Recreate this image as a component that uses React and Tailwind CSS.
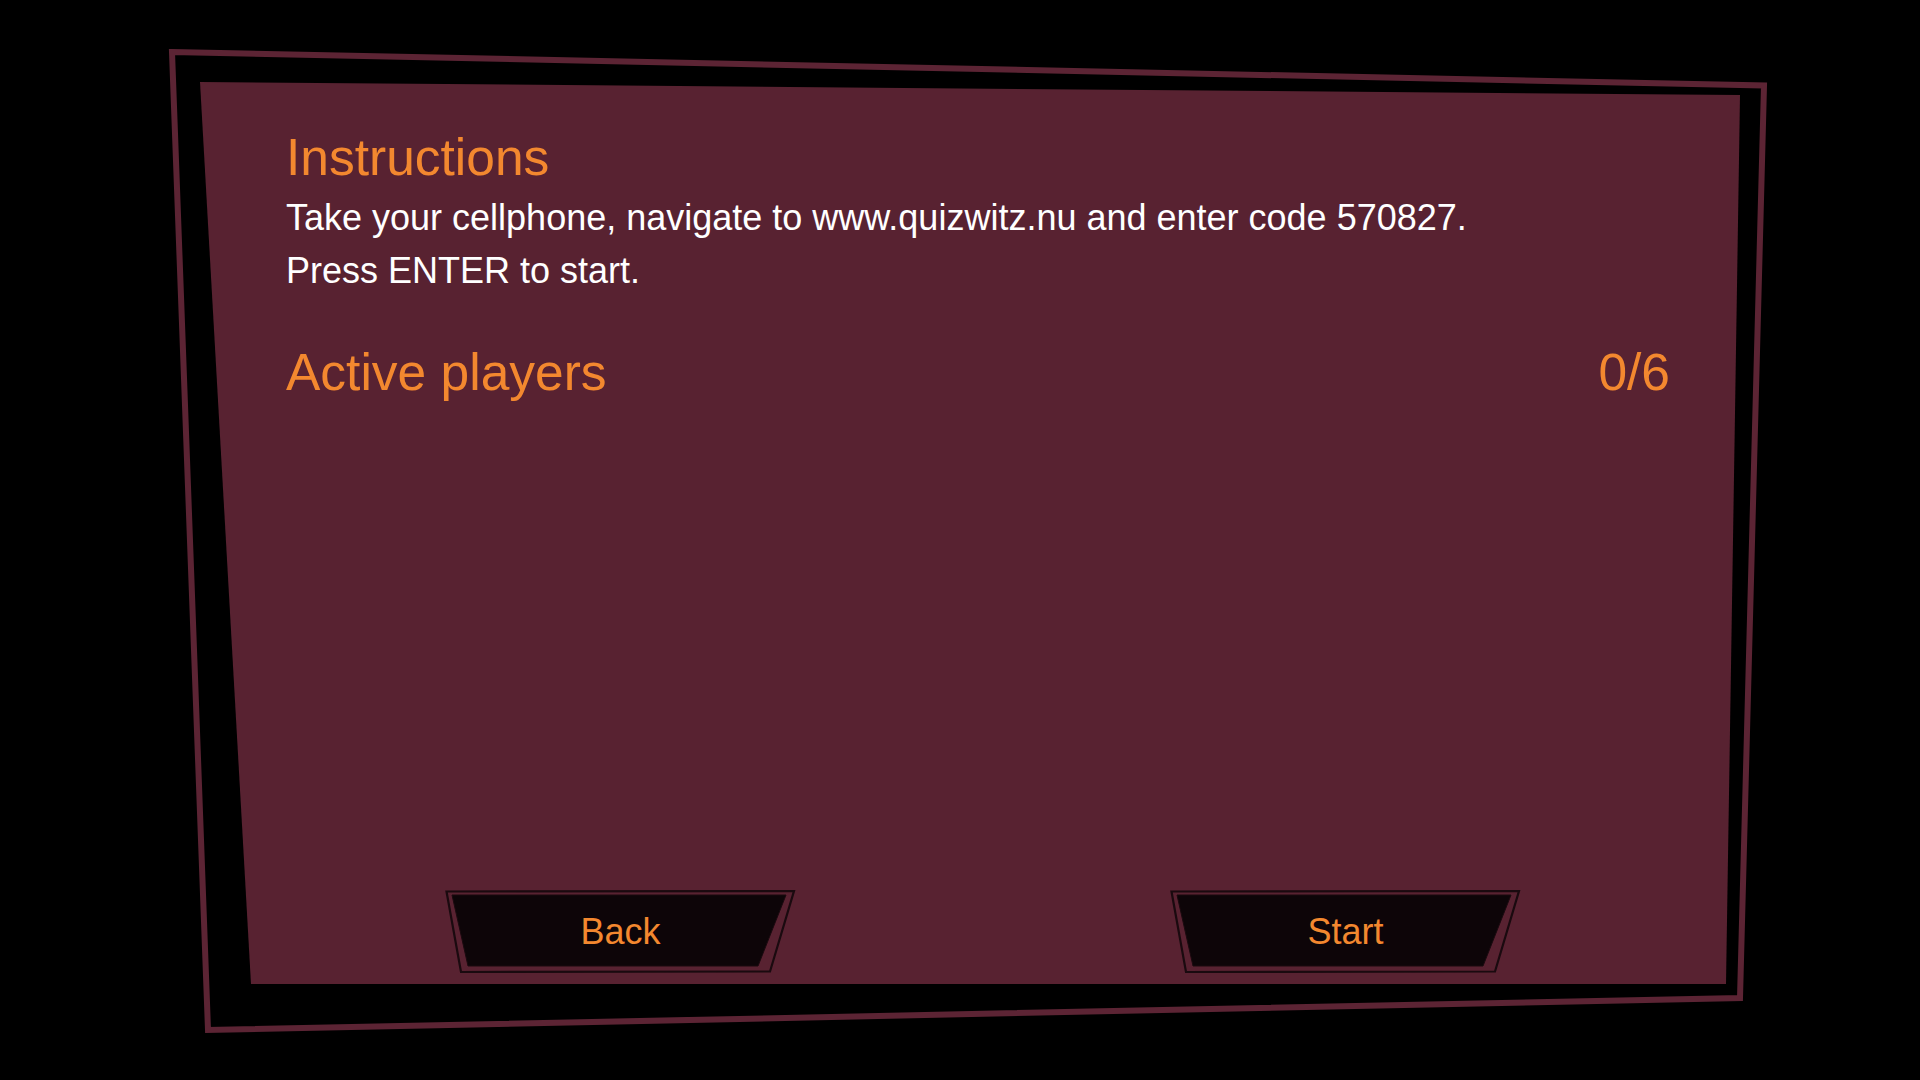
import React from "react";

function TrapButton({ label }) {
  return (
    <button
      type="button"
      className="relative w-[351px] h-[85px] flex justify-center cursor-pointer bg-transparent border-0 p-0"
    >
      <svg
        className="absolute inset-0 pointer-events-none"
        width="351"
        height="85"
        viewBox="0 0 351 85"
      >
        <polygon
          points="1.5,2.5 349,2 325,82.5 16,83"
          fill="none"
          stroke="#1a0a0f"
          strokeWidth="2.2"
        />
        <polygon
          points="7,6 341,6 313,77 23,77"
          fill="#0d0508"
          stroke="#1a0a0f"
          strokeWidth="1"
        />
      </svg>
      <span className="relative pt-[23px] text-[36px] leading-[40px] text-[#f3882f] font-['Liberation_Sans',Arial,sans-serif]">
        {label}
      </span>
    </button>
  );
}

export default function App() {
  return (
    <div className="relative w-[1920px] h-[1080px] bg-black overflow-hidden pt-[82px] pl-[200px] font-['Liberation_Sans',Arial,sans-serif]">
      <svg
        className="absolute inset-0 pointer-events-none"
        width="1920"
        height="1080"
        viewBox="0 0 1920 1080"
      >
        <polygon
          points="172,52 1764,85.5 1740,998 208,1030"
          fill="none"
          stroke="#5c2434"
          strokeWidth="6"
        />
      </svg>

      <div className="relative w-[1540px] h-[902px] bg-[#582231] [clip-path:polygon(0_0,100%_13px,1526px_100%,51px_100%)] flex flex-col pt-[46px] pl-[86px] pr-[70px] pb-[10px]">
        <h1 className="text-[51.5px] leading-[58px] text-[#f3882f] font-normal">
          Instructions
        </h1>
        <div className="mt-[5px] text-[36px] leading-[53px] text-white">
          <p>
            Take your cellphone, navigate to www.quizwitz.nu and enter code
            570827.
          </p>
          <p>Press ENTER to start.</p>
        </div>

        <div className="mt-[46px] flex justify-between text-[51.5px] leading-[58px] text-[#f3882f]">
          <span>Active players</span>
          <span>0/6</span>
        </div>

        <div className="flex-1" />

        <div className="flex gap-[374px] pl-[159px]">
          <TrapButton label="Back" />
          <TrapButton label="Start" />
        </div>
      </div>
    </div>
  );
}
